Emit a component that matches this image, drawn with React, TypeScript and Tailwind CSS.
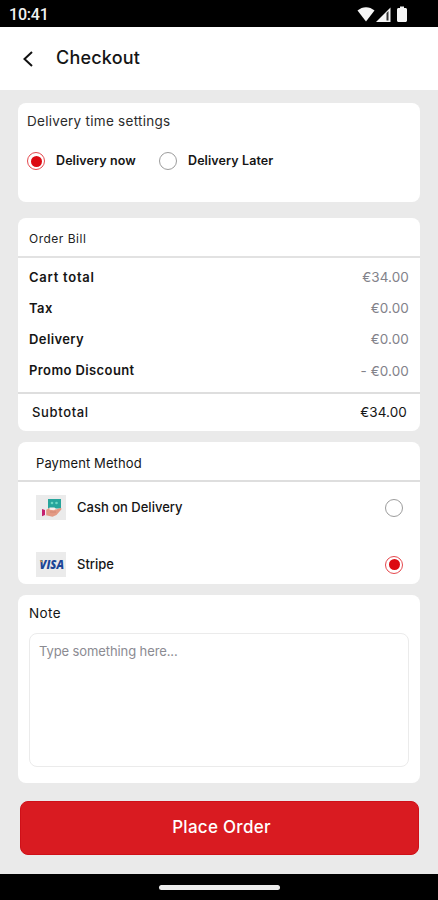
import React, { useState } from 'react';

interface RadioProps {
  checked: boolean;
  onClick: () => void;
}

const Radio: React.FC<RadioProps> = ({ checked, onClick }) => (
  <button
    onClick={onClick}
    className={`flex size-[18px] shrink-0 items-center justify-center rounded-full border bg-white ${
      checked ? 'border-[#e5484d]' : 'border-[#9c9c9c]'
    }`}
  >
    {checked && <span className="size-[11px] rounded-full bg-[#dc0a12]"></span>}
  </button>
);

const CashIcon = () => (
  <svg viewBox="0 0 30 25" className="h-[25px] w-[30px]">
    <rect x="12" y="4" width="13" height="9.500" fill="#27a59c" />
    <circle cx="16" cy="8" r="1.300" fill="#6cd8c4" />
    <circle cx="20.500" cy="8" r="1.300" fill="#6cd8c4" />
    <path d="M9 15.500l4.500-2.500h4.500l2 1.500 4.500-1.500c1.200 0 1.200 1 .6 1.800L20.500 20l-4 1.800L9 20z" fill="#e39a84" />
    <path d="M13.500 12.500h5l1.500 1.500-2 1.200-4.500-.5z" fill="#f7efec" />
    <path d="M14 17h6" stroke="#cf8470" strokeWidth=".8" />
    <path d="M6 14l3 1v5l-3 1.200z" fill="#c4206f" />
    <path d="M9 15h1.200v5H9z" fill="#f4e6ee" />
  </svg>
);

const VisaIcon = () => (
  <svg viewBox="0 0 30 25" className="h-[25px] w-[30px]">
    <text
      x="3.500"
      y="17"
      textLength="24.500"
      lengthAdjust="spacingAndGlyphs"
      className="font-['Open_Sans',sans-serif] text-[11.500px] font-extrabold italic"
      fill="#1c4596"
    >
      VISA
    </text>
    <path d="M3.500 8.500h2.600l.8 2.600z" fill="#e8a33a" />
  </svg>
);

const StatusBar = () => (
  <div className="flex h-[27px] items-center justify-between bg-black pr-[29px] pl-[9px] text-[#f2f2f2]">
    <span className="pt-[3px] font-['Roboto',sans-serif] text-[16px] leading-4 font-medium tracking-[-0.2px]">10:41</span>
    <svg viewBox="0 0 52 18" className="h-[18px] w-[52px]" fill="#f5f5f5">
      <path d="M0.500 5.500C5.500 1 12.500 1 17.500 5.500L9 16.500z" />
      <path d="M33.500 2.500v14.500H19z" />
      <path d="M29.500 8v7.500h2V6z" fill="#333" />
      <path d="M43 1.500h4V3h1.500c.8 0 1.500.7 1.500 1.500v11c0 .8-.7 1.500-1.500 1.500h-7c-.8 0-1.500-.7-1.500-1.500v-11c0-.8.7-1.500 1.500-1.500H43z" />
    </svg>
  </div>
);

export default function App() {
  const [time, setTime] = useState('now');
  const [method, setMethod] = useState('stripe');

  const bill = [
    { name: 'Cart total', value: '€34.00', tracking: 'tracking-[0.75px]' },
    { name: 'Tax', value: '€0.00', tracking: 'tracking-[0.4px]' },
    { name: 'Delivery', value: '€0.00', tracking: 'tracking-[0.4px]' },
    { name: 'Promo Discount', value: '- €0.00', tracking: 'tracking-[0.4px]' },
  ];

  return (
    <div className="flex h-[900px] w-[438px] flex-col overflow-hidden bg-[#eaeaea] font-['Inter',sans-serif] text-[13px] text-[#151515]">
      <StatusBar />

      {/* Header */}
      <header className="flex h-[63px] items-center bg-white pl-[22px]">
        <svg viewBox="0 0 12 18" className="h-[18px] w-3" fill="none" stroke="#111" strokeWidth="2">
          <path d="M10 2L2.500 9l7.500 7" />
        </svg>
        <h1 className="-mt-px ml-[22px] text-[18px] leading-6 font-medium tracking-[0.2px]">Checkout</h1>
      </header>

      <main className="flex flex-1 flex-col px-[18px] pt-[13px]">
        {/* Delivery time */}
        <section className="h-[99px] rounded-lg bg-white px-[9px] pt-2">
          <h2 className="text-[13.500px] leading-5 tracking-[0.28px] text-[#2b2b2b]">Delivery time settings</h2>
          <div className="mt-[21px] flex items-center leading-[18px] font-semibold">
            <Radio checked={time === 'now'} onClick={() => setTime('now')} />
            <span className="ml-[11px] w-[103px] text-[12.500px] tracking-[0.1px]">Delivery now</span>
            <Radio checked={time === 'later'} onClick={() => setTime('later')} />
            <span className="ml-[11px] text-[12.500px] tracking-[0.1px]">Delivery Later</span>
          </div>
        </section>

        {/* Bill */}
        <section className="mt-[16px] h-[213px] rounded-lg bg-white">
          <h2 className="h-[40px] border-b-2 border-[#e2e2e2] px-[11px] pt-[11px] text-[12px] leading-5 tracking-[0.5px] text-[#222]">Order Bill</h2>
          <div className="h-[136px] border-b-2 border-[#dedede] px-[11px] pt-[4px]">
            {bill.map((row) => (
              <div key={row.name} className="flex h-[31.200px] items-center justify-between">
                <span className={`font-semibold ${row.tracking}`}>{row.name}</span>
                <span className="pb-px text-[13.500px] tracking-[0.1px] text-[#82828a]">{row.value}</span>
              </div>
            ))}
          </div>
          <div className="flex h-[37px] items-center justify-between pr-[13px] pl-[14px]">
            <span className="font-medium tracking-[0.65px]">Subtotal</span>
            <span className="text-[13.500px] tracking-[0.1px]">€34.00</span>
          </div>
        </section>

        {/* Payment */}
        <section className="mt-[11px] h-[142px] rounded-lg bg-white">
          <h2 className="h-[40px] border-b-2 border-[#dedede] px-[18px] pt-[11px] leading-5 tracking-[0.1px]">Payment Method</h2>
          <div className="flex h-[51px] items-center pr-[17px] pl-[18px]">
            <span className="bg-[#ebebeb]"><CashIcon /></span>
            <span className="ml-[11px] flex-1 font-medium">Cash on Delivery</span>
            <Radio checked={method === 'cash'} onClick={() => setMethod('cash')} />
          </div>
          <div className="mt-[6px] flex h-[51px] items-center pr-[17px] pl-[18px]">
            <span className="bg-[#ebebeb]"><VisaIcon /></span>
            <span className="ml-[11px] flex-1 font-medium">Stripe</span>
            <Radio checked={method === 'stripe'} onClick={() => setMethod('stripe')} />
          </div>
        </section>

        {/* Note */}
        <section className="mt-[11px] h-[188px] rounded-lg bg-white px-[11px] pt-2">
          <h2 className="text-[13.500px] leading-5 tracking-[0.4px]">Note</h2>
          <textarea
            placeholder="Type something here..."
            className="mt-[10px] block h-[134px] w-full resize-none rounded-lg border border-[#ebebeb] px-[9px] py-[7px] text-[13px] leading-5 tracking-[-0.1px] outline-none placeholder:text-[#8b8b92]"
          />
        </section>

        <button className="mt-[18px] mr-px ml-[2px] h-[54px] rounded-lg border border-[#cf1018] bg-[#d91b21] pb-px pl-1 text-[17px] font-medium tracking-[0.28px] text-white">
          Place Order
        </button>
      </main>

      <div className="flex h-[26px] items-center justify-center bg-black">
        <div className="h-[5px] w-[121px] rounded-full bg-[#ececec]"></div>
      </div>
    </div>
  );
}
